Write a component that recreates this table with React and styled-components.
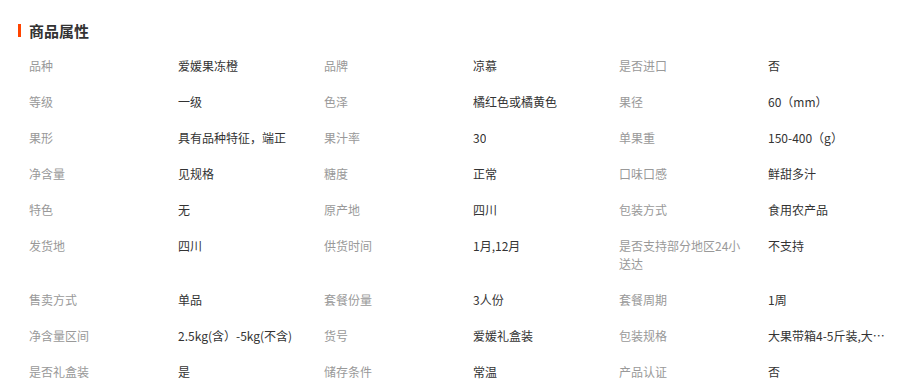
import React from 'react'
import styled, { createGlobalStyle } from 'styled-components'

const GlobalStyle = createGlobalStyle`
  body {
    margin: 0;
    background: #fff;
    font-family: "Noto Sans CJK SC", "Liberation Sans", sans-serif;
  }
`

const Container = styled.div`
  width: 898px;
  padding: 22px 0 0 0;
`

const Title = styled.h3`
  margin: 0 0 8px 0;
  padding-left: 29px;
  position: relative;
  font-size: 15px;
  line-height: 18px;
  font-weight: bold;
  color: #333;
  &::before {
    content: '';
    position: absolute;
    left: 18px;
    top: 2px;
    width: 3px;
    height: 13px;
    background: #ff4400;
  }
`

const Grid = styled.ul`
  list-style: none;
  margin: 0;
  padding: 0 0 0 29px;
  display: grid;
  grid-template-columns: repeat(3, 295px);
`

const Item = styled.li`
  display: flex;
  align-items: flex-start;
  padding: 9px 0;
  font-size: 12px;
  line-height: 18px;
`

const Label = styled.span`
  width: 124px;
  margin-right: 25px;
  color: #999;
  flex-shrink: 0;
  word-break: break-all;
`

const Value = styled.span`
  max-width: 118px;
  color: #333;
  white-space: nowrap;
  overflow: hidden;
  text-overflow: ellipsis;
`

const attrs = [
  ['品种', '爱媛果冻橙'],
  ['品牌', '凉慕'],
  ['是否进口', '否'],
  ['等级', '一级'],
  ['色泽', '橘红色或橘黄色'],
  ['果径', '60（mm）'],
  ['果形', '具有品种特征，端正'],
  ['果汁率', '30'],
  ['单果重', '150-400（g）'],
  ['净含量', '见规格'],
  ['糖度', '正常'],
  ['口味口感', '鲜甜多汁'],
  ['特色', '无'],
  ['原产地', '四川'],
  ['包装方式', '食用农产品'],
  ['发货地', '四川'],
  ['供货时间', '1月,12月'],
  ['是否支持部分地区24小送达', '不支持'],
  ['售卖方式', '单品'],
  ['套餐份量', '3人份'],
  ['套餐周期', '1周'],
  ['净含量区间', '2.5kg(含）-5kg(不含)'],
  ['货号', '爱媛礼盒装'],
  ['包装规格', '大果带箱4-5斤装,大果带箱9斤装'],
  ['是否礼盒装', '是'],
  ['储存条件', '常温'],
  ['产品认证', '否'],
]

const App = () => {
  return (
    <Container>
      <GlobalStyle />
      <Title>商品属性</Title>
      <Grid>
        {attrs.map(([k, v]) => (
          <Item key={k}>
            <Label>{k}</Label>
            <Value title={v}>{v}</Value>
          </Item>
        ))}
      </Grid>
    </Container>
  )
}

export default App
